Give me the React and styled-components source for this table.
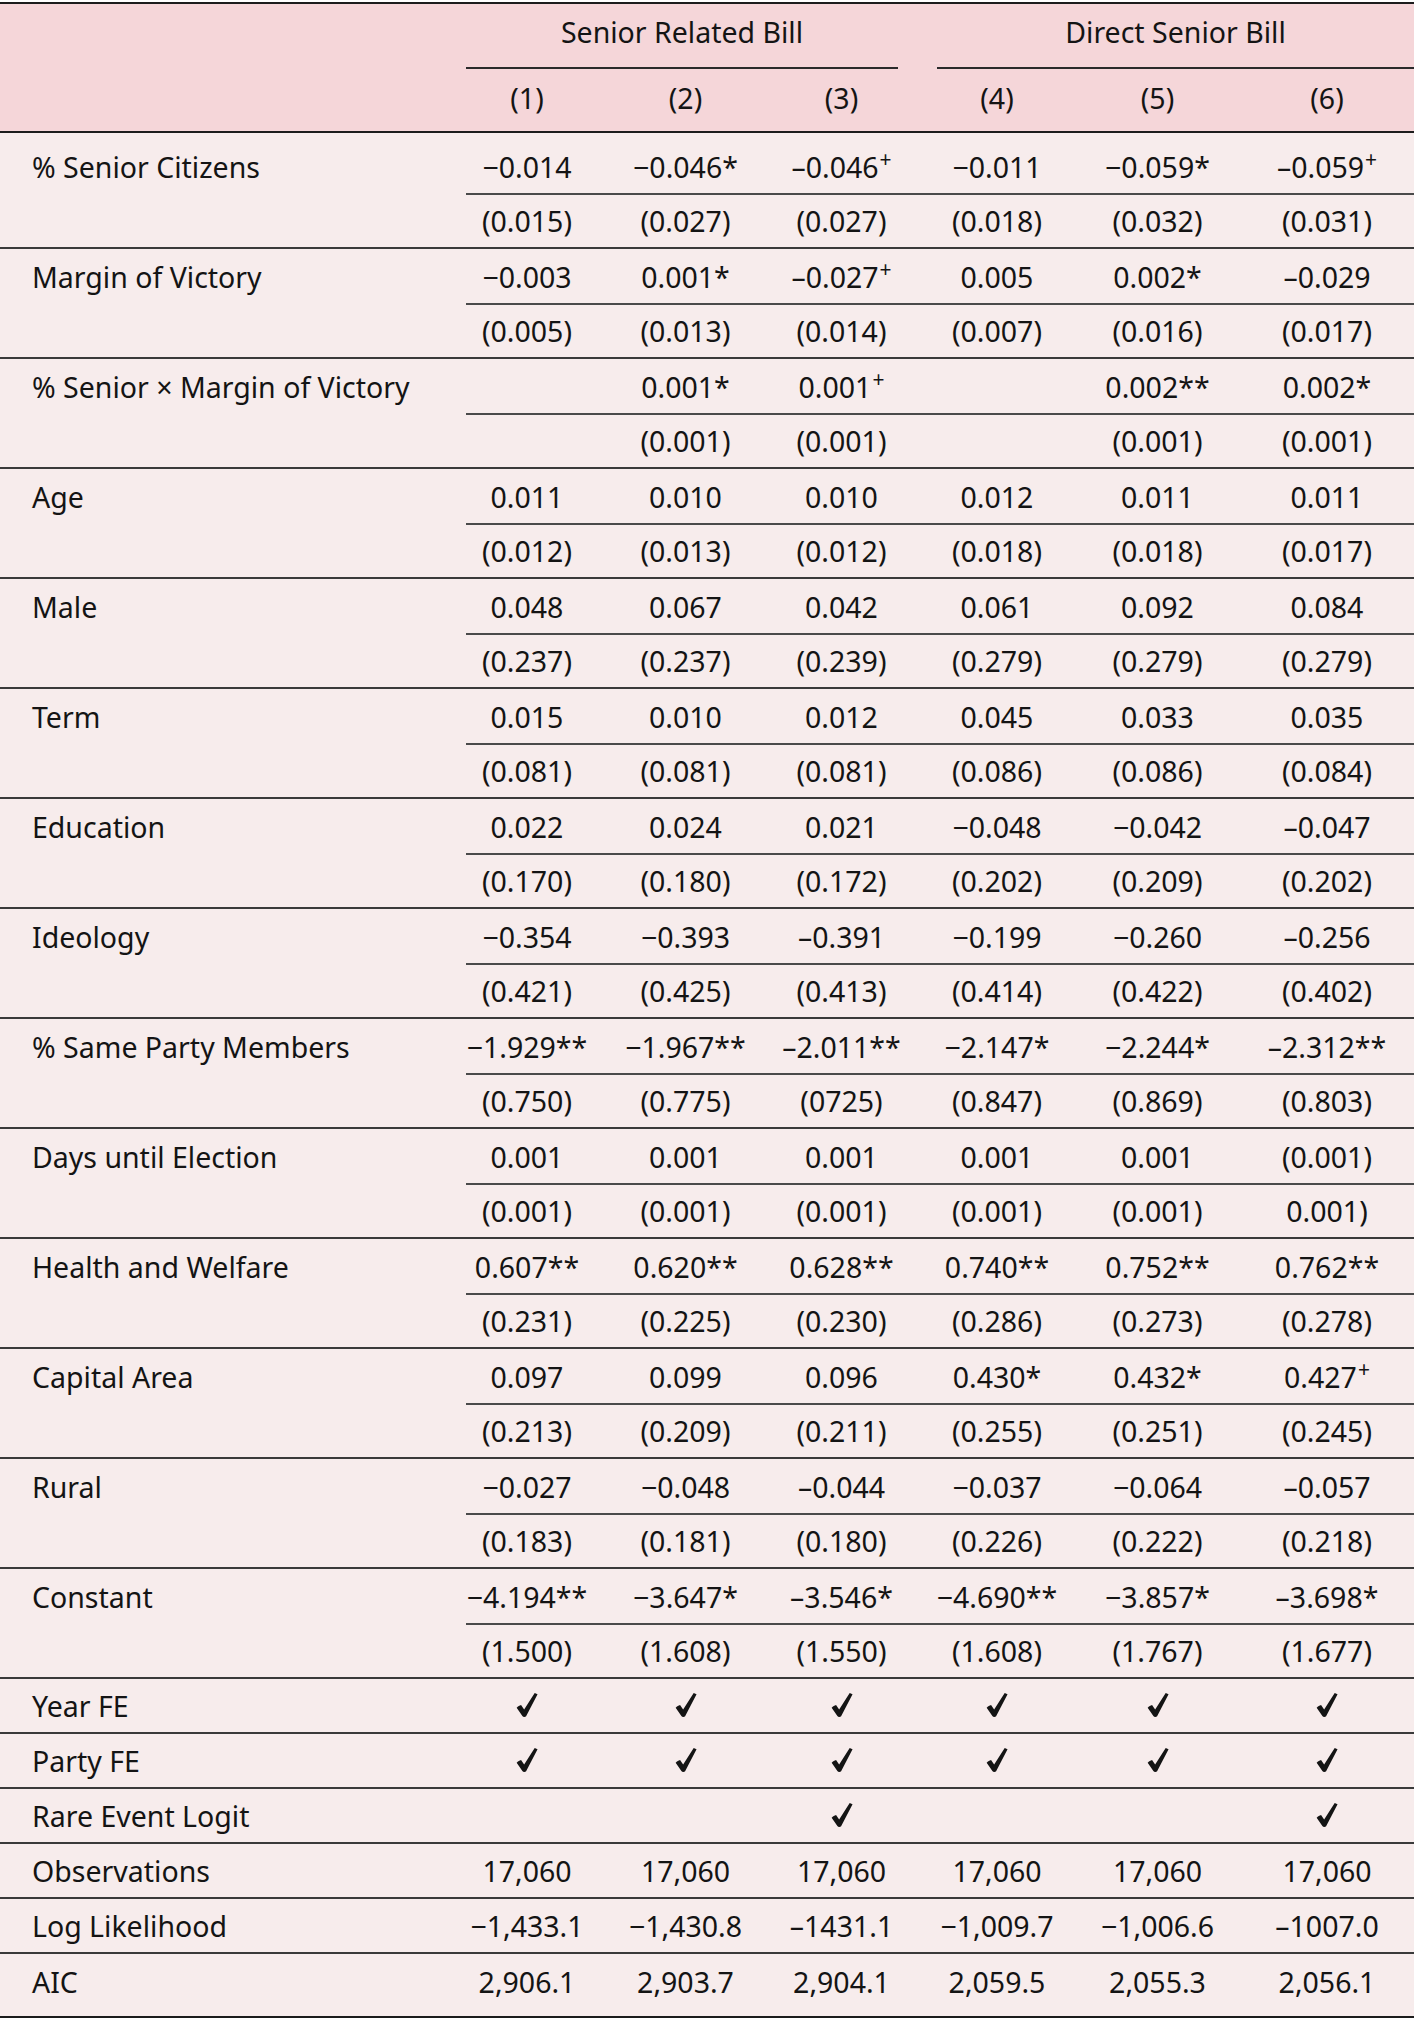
import React from 'react';
import styled, { createGlobalStyle } from 'styled-components';

const GlobalStyle = createGlobalStyle`
	html, body {
		margin: 0;
		padding: 0;
		background: #fff;
	}
	body {
		font-family: 'Noto Sans', 'Liberation Sans', sans-serif;
		color: #141414;
	}
`;

const COLS = '447px 160px 157px 155px 156px 165px 174px';

const Table = styled.div`
	width: 1414px;
	margin-top: 2px;
	border-top: 2px solid #1c1c1c;
	border-bottom: 2px solid #1c1c1c;
	font-size: 28.5px;
	background: #f7ecec;
`;

const Head = styled.div`
	background: #f5d6d9;
	border-bottom: 2px solid #1c1c1c;
`;

const HeadRow = styled.div`
	display: grid;
	grid-template-columns: ${COLS};
	height: ${props => props.$h}px;
	padding-bottom: ${props => props.$pb || 0}px;
	box-sizing: border-box;
`;

const GroupTitle = styled.div`
	grid-column: span 3;
	display: flex;
	align-items: center;
	justify-content: center;
	margin: 0 ${props => props.$right}px 0 ${props => props.$left}px;
	border-bottom: 2px solid #2a2a2a;
	padding-bottom: 8px;
`;

const Group = styled.div`
	padding-top: ${props => (props.$first ? 6 : 0)}px;
	border-bottom: 2px solid #3a3a3a;
`;

const SubRow = styled.div`
	display: grid;
	grid-template-columns: ${COLS};
	height: ${props => props.$h}px;
	${props =>
		props.$rule &&
		`
		background-image: linear-gradient(#4a4a4a, #4a4a4a);
		background-size: calc(100% - 466px) 2px;
		background-position: right bottom;
		background-repeat: no-repeat;
	`}
`;

const Single = styled.div`
	display: grid;
	grid-template-columns: ${COLS};
	height: ${props => props.$h || 55}px;
	padding-bottom: ${props => props.$pb || 0}px;
	box-sizing: border-box;
	border-bottom: ${props => (props.$last ? 'none' : '2px solid #3a3a3a')};
`;

const Label = styled.div`
	display: flex;
	align-items: center;
	padding-left: 32px;
	white-space: nowrap;
`;

const Cell = styled.div`
	display: flex;
	align-items: center;
	justify-content: center;
	white-space: nowrap;
`;

const Sup = styled.sup`
	font-size: 21px;
	vertical-align: 11px;
	line-height: 0;
	margin-left: 1px;
`;

const CheckSvg = styled.svg`
	width: 22px;
	height: 26px;
	display: block;
	margin-top: -2px;
`;

const CheckMark = () => (
	<CheckSvg viewBox="0 0 20 23">
		<path
			d="M0.6 14 C1.8 12.6 3.2 11.8 4.6 11.4 L7.4 15.6 L17 0.6 L19.6 1.8 L9.2 21.8 C8.4 22.6 6.4 22.6 5.8 21.6 Z"
			fill="#141414"
		/>
	</CheckSvg>
);

const groups = [
	['% Senior Citizens',
		['−0.014', '−0.046*', '–0.046+', '−0.011', '−0.059*', '–0.059+'],
		['(0.015)', '(0.027)', '(0.027)', '(0.018)', '(0.032)', '(0.031)']],
	['Margin of Victory',
		['−0.003', '0.001*', '–0.027+', '0.005', '0.002*', '–0.029'],
		['(0.005)', '(0.013)', '(0.014)', '(0.007)', '(0.016)', '(0.017)']],
	['% Senior × Margin of Victory',
		['', '0.001*', '0.001+', '', '0.002**', '0.002*'],
		['', '(0.001)', '(0.001)', '', '(0.001)', '(0.001)']],
	['Age',
		['0.011', '0.010', '0.010', '0.012', '0.011', '0.011'],
		['(0.012)', '(0.013)', '(0.012)', '(0.018)', '(0.018)', '(0.017)']],
	['Male',
		['0.048', '0.067', '0.042', '0.061', '0.092', '0.084'],
		['(0.237)', '(0.237)', '(0.239)', '(0.279)', '(0.279)', '(0.279)']],
	['Term',
		['0.015', '0.010', '0.012', '0.045', '0.033', '0.035'],
		['(0.081)', '(0.081)', '(0.081)', '(0.086)', '(0.086)', '(0.084)']],
	['Education',
		['0.022', '0.024', '0.021', '−0.048', '−0.042', '–0.047'],
		['(0.170)', '(0.180)', '(0.172)', '(0.202)', '(0.209)', '(0.202)']],
	['Ideology',
		['−0.354', '−0.393', '–0.391', '−0.199', '−0.260', '–0.256'],
		['(0.421)', '(0.425)', '(0.413)', '(0.414)', '(0.422)', '(0.402)']],
	['% Same Party Members',
		['−1.929**', '−1.967**', '–2.011**', '−2.147*', '−2.244*', '–2.312**'],
		['(0.750)', '(0.775)', '(0725)', '(0.847)', '(0.869)', '(0.803)']],
	['Days until Election',
		['0.001', '0.001', '0.001', '0.001', '0.001', '(0.001)'],
		['(0.001)', '(0.001)', '(0.001)', '(0.001)', '(0.001)', '0.001)']],
	['Health and Welfare',
		['0.607**', '0.620**', '0.628**', '0.740**', '0.752**', '0.762**'],
		['(0.231)', '(0.225)', '(0.230)', '(0.286)', '(0.273)', '(0.278)']],
	['Capital Area',
		['0.097', '0.099', '0.096', '0.430*', '0.432*', '0.427+'],
		['(0.213)', '(0.209)', '(0.211)', '(0.255)', '(0.251)', '(0.245)']],
	['Rural',
		['−0.027', '−0.048', '–0.044', '−0.037', '−0.064', '–0.057'],
		['(0.183)', '(0.181)', '(0.180)', '(0.226)', '(0.222)', '(0.218)']],
	['Constant',
		['−4.194**', '−3.647*', '–3.546*', '−4.690**', '−3.857*', '–3.698*'],
		['(1.500)', '(1.608)', '(1.550)', '(1.608)', '(1.767)', '(1.677)']]
];

const CHECK = 'check';

const stats = [
	['Year FE', [CHECK, CHECK, CHECK, CHECK, CHECK, CHECK]],
	['Party FE', [CHECK, CHECK, CHECK, CHECK, CHECK, CHECK]],
	['Rare Event Logit', ['', '', CHECK, '', '', CHECK]],
	['Observations', ['17,060', '17,060', '17,060', '17,060', '17,060', '17,060']],
	['Log Likelihood', ['−1,433.1', '−1,430.8', '–1431.1', '−1,009.7', '−1,006.6', '–1007.0']],
	['AIC', ['2,906.1', '2,903.7', '2,904.1', '2,059.5', '2,055.3', '2,056.1']]
];

const Value = ({ v }) => {
	if (v === CHECK) return <CheckMark />;
	if (v.endsWith('+')) {
		return (
			<span>
				{v.slice(0, -1)}
				<Sup>+</Sup>
			</span>
		);
	}
	return <span>{v}</span>;
};

const App = () => (
	<>
		<GlobalStyle />
		<Table>
			<Head>
				<HeadRow $h={65}>
					<div />
					<GroupTitle $left={19} $right={21}>Senior Related Bill</GroupTitle>
					<GroupTitle $left={18} $right={0}>Direct Senior Bill</GroupTitle>
				</HeadRow>
				<HeadRow $h={62} $pb={4}>
					<div />
					{[1, 2, 3, 4, 5, 6].map(n => (
						<Cell key={n}>({n})</Cell>
					))}
				</HeadRow>
			</Head>
			{groups.map(([label, coefs, ses], i) => (
				<Group key={label} $first={i === 0}>
					<SubRow $h={56} $rule>
						<Label>{label}</Label>
						{coefs.map((v, j) => (
							<Cell key={j}>
								<Value v={v} />
							</Cell>
						))}
					</SubRow>
					<SubRow $h={52}>
						<div />
						{ses.map((v, j) => (
							<Cell key={j}>
								<Value v={v} />
							</Cell>
						))}
					</SubRow>
				</Group>
			))}
			{stats.map(([label, vals], i) => {
				const last = i === stats.length - 1;
				return (
					<Single key={label} $last={last} $h={last ? 62 : 55} $pb={last ? 6 : 0}>
						<Label>{label}</Label>
						{vals.map((v, j) => (
							<Cell key={j}>
								<Value v={v} />
							</Cell>
						))}
					</Single>
				);
			})}
		</Table>
	</>
);

export default App;
